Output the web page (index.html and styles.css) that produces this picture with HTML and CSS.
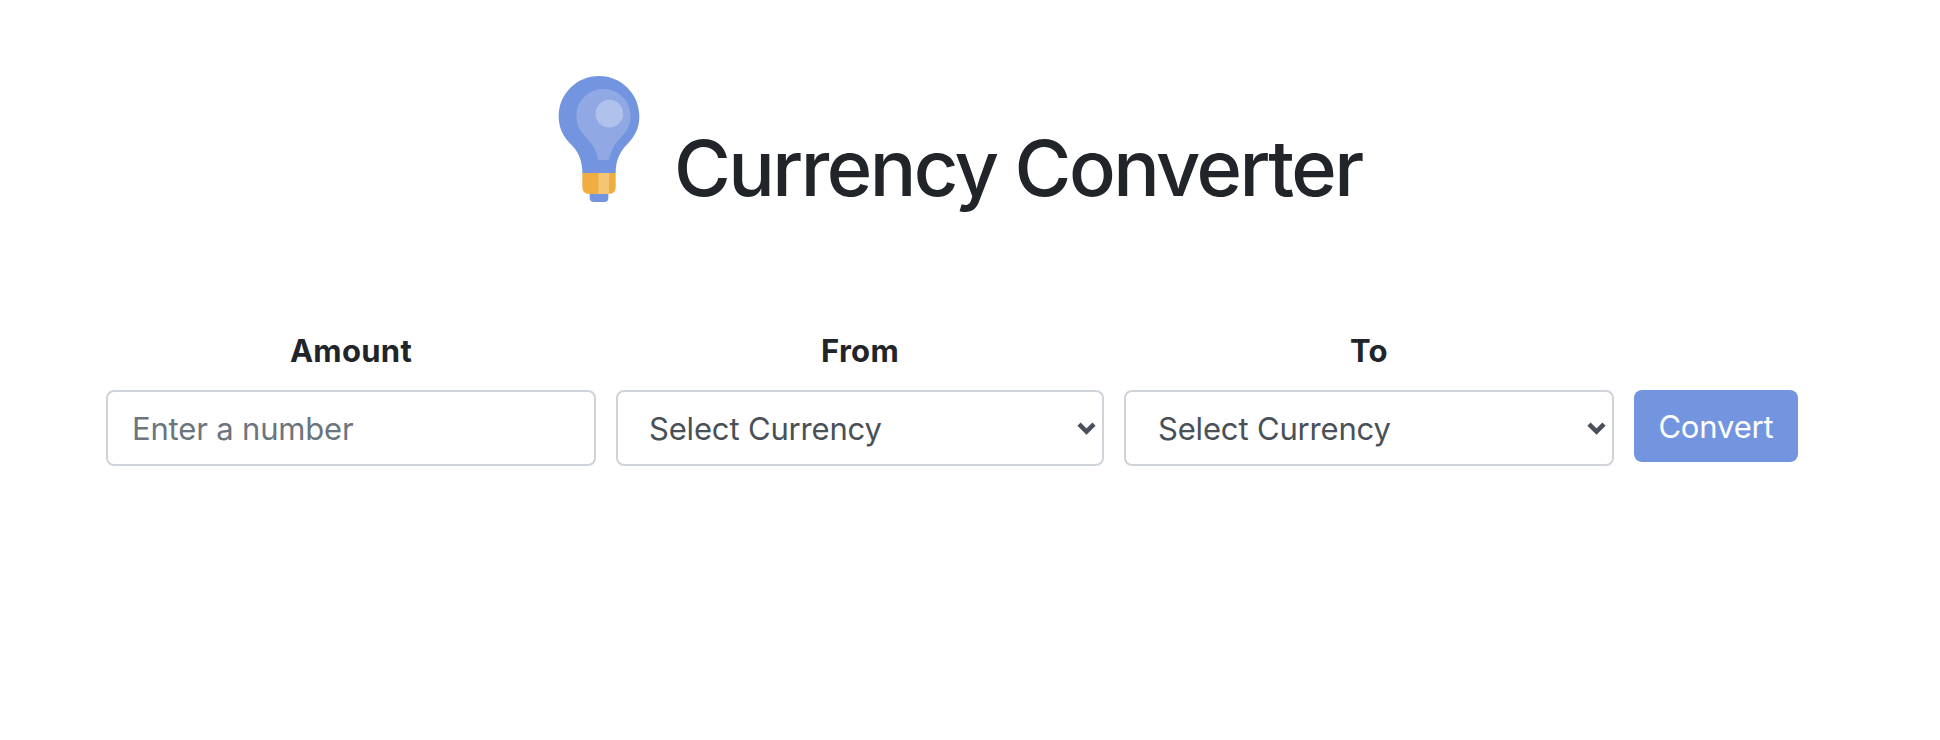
FILE: index.html
```html
<!DOCTYPE html>
<html lang="en">
<head>
<meta charset="utf-8">
<title>Currency Converter</title>
<link rel="stylesheet" href="styles.css">
</head>
<body>
<header class="header">
  <svg class="bulb" viewBox="0 0 360 480" aria-hidden="true">
    <path class="bulb-blue" d="M149 398H205V414Q205 426 193 426H161Q149 426 149 414Z"/>
    <path class="bulb-blue" d="M177 48C244 48 298 102 298 169C298 202 286 229 263 251C240 274 227 300 227 340H127C127 300 115 274 91 251C68 228 56 202 56 169C56 102 110 48 177 48Z"/>
    <path class="bulb-inner" d="M190 87C236 87 272 123 272 168C272 192 262 212 247 227C226 248 213 268 207 300H175C169 268 155 249 134 227C119 212 109 192 109 168C109 123 145 87 190 87Z"/>
    <circle class="bulb-shine" cx="208" cy="161" r="41.500"/>
    <path class="bulb-cap" d="M127 339H227V381Q227 402 206 402H148Q127 402 127 381Z"/>
    <path class="bulb-cap-shine" d="M175 339H207V402H175Z"/>
  </svg>
  <h1 class="title">Currency Converter</h1>
</header>
<form class="converter">
  <div class="field">
    <label class="label" for="amount">Amount</label>
    <input class="control" id="amount" type="text" placeholder="Enter a number">
  </div>
  <div class="field field-from">
    <label class="label" for="from">From</label>
    <div class="control select"><span id="from">Select Currency</span>
      <svg class="chevron" viewBox="0 0 19 13"><path d="M2 2.200L9.500 9.600L17 2.200"/></svg>
    </div>
  </div>
  <div class="field">
    <label class="label" for="to">To</label>
    <div class="control select"><span id="to">Select Currency</span>
      <svg class="chevron" viewBox="0 0 19 13"><path d="M2 2.200L9.500 9.600L17 2.200"/></svg>
    </div>
  </div>
  <button class="convert" type="button">Convert</button>
</form>
</body>
</html>
```
FILE: styles.css
```css
* { box-sizing: border-box; }
body {
  margin: 0;
  padding: 60px 0 0;
  background: #fff;
  color: #212529;
  font-family: Inter, "Liberation Sans", sans-serif;
  font-size: 31px;
}
.header {
  display: flex;
  height: 160px;
  padding-left: 540px;
}
.bulb { width: 120px; height: 160px; flex: none; }
.bulb-blue { fill: #7395df; }
.bulb-inner { fill: #90a8e3; }
.bulb-shine { fill: #b0c2ec; }
.bulb-cap { fill: #efad42; }
.bulb-cap-shine { fill: #f3c673; }
.title {
  margin: 60px 0 0 14px;
  font-size: 77.5px;
  font-weight: 500;
  line-height: 96px;
  letter-spacing: -2.55px;
  white-space: nowrap;
}
.converter {
  display: flex;
  gap: 20px;
  padding: 106px 0 0 106px;
}
.field { width: 490px; text-align: center; }
.field-from { width: 488px; }
.label {
  display: block;
  height: 64px;
  line-height: 50px;
  font-weight: 700;
  letter-spacing: 0.3px;
}
.control {
  display: block;
  width: 100%;
  height: 76px;
  padding: 0 24px;
  border: 2px solid #ced4da;
  border-radius: 8px;
  background: #fff;
  color: #495057;
  font: inherit;
  letter-spacing: -0.17px;
  outline: 0;
}
.control::placeholder { color: #6c757d; opacity: 1; }
.select {
  display: flex;
  align-items: center;
  justify-content: space-between;
  padding: 0 6px 0 32px;
}
.field-from .select { padding-left: 31px; }
.chevron { width: 19px; height: 13px; }
.chevron path { fill: none; stroke: #495057; stroke-width: 4.500; }
.convert {
  width: 164px;
  height: 72px;
  margin-top: 64px;
  padding: 0;
  border: 0;
  border-radius: 8px;
  background: #7395df;
  color: #fff;
  font: inherit;
  letter-spacing: -0.15px;
}
```
